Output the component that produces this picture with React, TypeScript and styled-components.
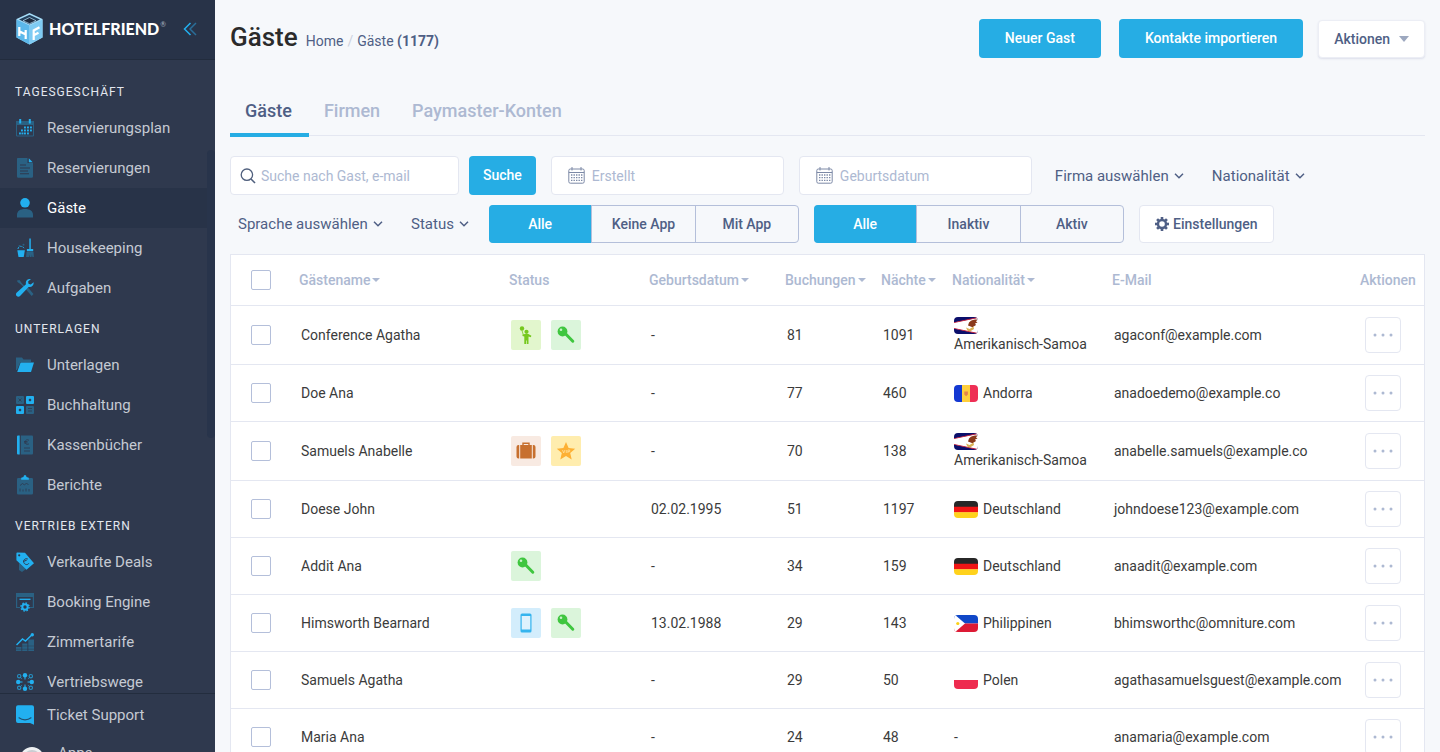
import React from "react";
import styled, { createGlobalStyle, css } from "styled-components";

const c = {
  bright: "#22b0f0",
  dim: "#2a6183",
  side: "#2f394e",
  sideDark: "#283348",
  blue: "#26ade4",
  text: "#4f5f85",
  muted: "#adb9d2",
  line: "#e4e7f1",
  outline: "#b4bfda",
  page: "#f6f8fb",
};

const Global = createGlobalStyle`
  *, *::before, *::after { box-sizing: border-box; }
  body { margin: 0; background: ${c.page}; color: #3b3b3b; font-family: Roboto, "Liberation Sans", sans-serif; font-size: 14px; }
  button, input, select { font: inherit; color: inherit; margin: 0; }
  svg { display: block; flex: none; }
`;

const Shell = styled.div`
  display: flex;
  height: 100vh;
  overflow: hidden;
`;

/* ---------- sidebar ---------- */

const Sidebar = styled.aside`
  display: flex;
  flex-direction: column;
  flex: none;
  width: 215px;
  position: relative;
  background: ${c.side};
`;

const Brand = styled.div`
  display: flex;
  align-items: center;
  height: 60px;
  flex: none;
  padding: 0 18px 2px 15px;
  background: ${c.sideDark};
  border-bottom: 1px solid #222c3d;
`;

const BrandLink = styled.a`
  display: flex;
  align-items: center;
  gap: 5px;
  color: #fff;
  text-decoration: none;
  font-family: Lato, "Liberation Sans", sans-serif;
  font-size: 16px;
  font-weight: 900;
  sup {
    align-self: flex-start;
    margin: 9px 0 0 -4px;
    font-size: 7px;
    line-height: 7px;
    font-weight: 400;
    color: #aab3c2;
  }
`;

const Collapse = styled.button`
  margin-left: auto;
  padding: 0;
  border: 0;
  background: none;
`;

const SideNav = styled.nav`
  flex: 1;
  min-height: 0;
  overflow: hidden;
  padding-top: 11px;
`;

const SideTitle = styled.h2`
  margin: 0;
  padding: 4px 15px 0;
  height: 37px;
  line-height: 35px;
  font-size: 12px;
  font-weight: 400;
  letter-spacing: 1px;
  text-transform: uppercase;
  color: #e3e7ee;
`;

const SideLink = styled.a<{ $active?: boolean }>`
  display: flex;
  align-items: center;
  gap: 13px;
  height: 40px;
  padding: 0 16px;
  font-size: 15px;
  text-decoration: none;
  color: ${(p) => (p.$active ? "#fff" : "#c5cad3")};
  background: ${(p) => (p.$active ? c.sideDark : "transparent")};
`;

const Thumb = styled.div`
  position: absolute;
  top: 150px;
  right: 0;
  width: 8px;
  height: 288px;
  border-radius: 4px;
  background: #28344b;
`;

const SideFooter = styled.div`
  flex: none;
  height: 59px;
  overflow: hidden;
  padding-top: 1px;
  background: ${c.side};
  border-top: 1px solid #232d3e;
`;

const AppsLink = styled(SideLink)`
  gap: 14px;
  height: 36px;
  padding-left: 20px;
`;

/* ---------- page head ---------- */

const Main = styled.main`
  flex: 1;
  min-width: 0;
  padding: 19px 15px 0;
`;

const Head = styled.header`
  display: flex;
  align-items: center;
  height: 39px;
`;

const Title = styled.h1`
  margin: 0 8px 0 0;
  padding-bottom: 4px;
  font-size: 26px;
  line-height: 36px;
  font-weight: 500;
  color: #2b2b2b;
`;

const Crumbs = styled.nav`
  padding-top: 4px;
  color: ${c.text};
  a { color: inherit; text-decoration: none; }
  span { color: #cdd2dd; padding: 0 4px; }
`;

const Actions = styled.div`
  display: flex;
  align-items: center;
  margin-left: auto;
`;

const Button = styled.button`
  height: 39px;
  padding: 0 26px 2px;
  border: 0;
  border-radius: 4px;
  background: ${c.blue};
  color: #fff;
  font-weight: 500;
  white-space: nowrap;
`;

const HeadButton = styled(Button)`
  margin-right: 18px;
`;

const SearchButton = styled(Button)`
  padding: 0 14px 2px;
  margin-left: -5px;
`;

const PlainButton = styled.button`
  display: flex;
  align-items: center;
  gap: 4px;
  height: 38px;
  padding: 0 15px;
  border: 1px solid ${c.line};
  border-radius: 4px;
  background: #fff;
  color: ${c.text};
  font-weight: 500;
`;

const MenuButton = styled(PlainButton)`
  gap: 9px;
  margin-left: -3px;
  border-color: #eceef5;
  box-shadow: 0 1px 2px rgba(80, 90, 150, 0.15);
`;

const Tabs = styled.div`
  display: flex;
  margin: 27px 0 20px;
  border-bottom: 1px solid ${c.line};
`;

const Tab = styled.button<{ $active?: boolean }>`
  height: 52px;
  margin-bottom: -2px;
  padding: 2px 17px 0 15px;
  border: 0;
  border-bottom: 4px solid ${(p) => (p.$active ? c.blue : "transparent")};
  background: none;
  font-size: 18px;
  font-weight: 500;
  color: ${(p) => (p.$active ? c.text : c.muted)};
`;

/* ---------- filters ---------- */

const FilterRow = styled.div`
  display: flex;
  align-items: center;
  gap: 15px;
  margin-bottom: 10px;
`;

const Field = styled.label<{ $icon?: "date" }>`
  display: flex;
  align-items: center;
  gap: ${(p) => (p.$icon ? 7 : 5)}px;
  flex: 0 1 ${(p) => (p.$icon ? 233 : 229)}px;
  height: 39px;
  padding: 0 10px 0 ${(p) => (p.$icon ? 16 : 9)}px;
  border: 1px solid ${c.line};
  border-radius: 4px;
  background: #fff;
  input {
    flex: 1;
    min-width: 0;
    padding: 0;
    border: 0;
    outline: 0;
    background: none;
  }
  input::placeholder { color: ${c.muted}; opacity: 1; }
`;

const Picker = styled.label`
  position: relative;
  display: flex;
  align-items: center;
  font-size: 15px;
  color: ${c.text};
  select {
    appearance: none;
    height: 38px;
    padding: 0 20px 0 8px;
    border: 0;
    background: none;
  }
  svg { position: absolute; right: 5px; pointer-events: none; }
`;

const Segments = styled.fieldset`
  display: flex;
  width: 310px;
  height: 38px;
  margin: 0;
  padding: 0;
  border: 1px solid ${c.outline};
  border-radius: 4px;
`;

const Segment = styled.label<{ $on?: boolean }>`
  position: relative;
  display: flex;
  flex: 1;
  align-items: center;
  justify-content: center;
  font-weight: 500;
  color: ${c.text};
  & + & { border-left: 1px solid ${c.outline}; }
  &:first-of-type { border-radius: 4px 0 0 4px; }
  &:last-of-type { border-radius: 0 4px 4px 0; }
  ${(p) =>
    p.$on &&
    css`
      margin: -1px 0 -1px -1px;
      background: ${c.blue};
      color: #fff;
    `}
  input {
    position: absolute;
    inset: 0;
    opacity: 0;
  }
`;

/* ---------- table ---------- */

const Frame = styled.div`
  margin-top: 11px;
  border: 1px solid ${c.line};
  background: #fff;
`;

const Table = styled.table`
  width: 100%;
  table-layout: fixed;
  border-spacing: 0;
  th {
    height: 51px;
    padding: 0 0 0 10px;
    border-bottom: 1px solid ${c.line};
    text-align: left;
    font-weight: 500;
    color: ${c.muted};
    white-space: nowrap;
  }
  td {
    padding: 10px 0 10px 12px;
    border-bottom: 1px solid ${c.line};
    line-height: 19px;
  }
  th:first-child, td:first-child { padding-left: 20px; }
  td:last-child { padding-left: 15px; }
`;

const Col = styled.col<{ $w?: number }>`
  width: ${(p) => (p.$w ? `${p.$w}px` : "auto")};
`;

const SortButton = styled.button`
  display: inline-flex;
  align-items: center;
  gap: 2px;
  padding: 0;
  border: 0;
  background: none;
  font-weight: 500;
`;

const Check = styled.input`
  appearance: none;
  display: block;
  width: 20px;
  height: 20px;
  border: 1px solid ${c.outline};
  border-radius: 2px;
  background: #fff;
`;

const Chips = styled.div`
  display: flex;
  gap: 10px;
`;

const Flag = styled.svg`
  display: inline-block;
  margin-right: 5px;
  border-radius: 4px;
  vertical-align: -4px;
`;

const Country = styled.span`
  display: inline-block;
  white-space: nowrap;
`;

const Dots = styled.button`
  display: flex;
  align-items: center;
  justify-content: center;
  width: 36px;
  height: 36px;
  padding: 0;
  border: 1px solid ${c.line};
  border-radius: 4px;
  background: #fff;
`;

/* ---------- drawings ---------- */

const I = ({ children }: { children: React.ReactNode }) => (
  <svg width="18" height="20" viewBox="0 0 18 20" aria-hidden="true">
    {children}
  </svg>
);

const dots = [
  [8, 9], [11, 9], [14, 9],
  [5, 12], [8, 12], [11, 12], [14, 12],
  [3, 15], [5.5, 15], [8, 15], [11, 15],
];

const icons: Record<string, React.ReactNode> = {
  plan: (
    <I>
      <path d="M0 3h18v4H0z" fill={c.dim} />
      <path d="M.5 6.500h17v11.500H.5z" fill="none" stroke={c.dim} />
      <path d="M3.200 1h2v4.500h-2zM12.800 1h2v4.500h-2z" fill={c.bright} />
      {dots.map(([x, y]) => (
        <rect key={`${x}-${y}`} x={x} y={y - 0.5} width="1.900" height="1.900" fill={c.bright} />
      ))}
    </I>
  ),
  doc: (
    <I>
      <path d="M2 0h9.500v5H17v13.500a1.300 1.300 0 0 1-1.300 1.300H2.300A1.300 1.300 0 0 1 1 18.500V1.200A1 1 0 0 1 2 0z" fill={c.dim} />
      <path d="M12.800.3 16.700 4.200H12.800z" fill={c.bright} />
      <path d="M4 7h6M4 10h10M4 13h8M4 15.700h9" stroke={c.side} strokeWidth="1.100" />
    </I>
  ),
  person: (
    <I>
      <circle cx="9" cy="4.800" r="4.800" fill={c.bright} />
      <path d="M1 19.500v-2.500c0-4 3-6 8-6s8 2 8 6v2.500z" fill={c.dim} />
    </I>
  ),
  clean: (
    <I>
      <path d="M1.300 12.200h7.600l-1.200 6.800H2.500z" fill={c.bright} />
      <path d="M2 11c0-3.500 5.500-3.500 6.300 0" fill="none" stroke={c.bright} strokeDasharray="2 1" />
      <circle cx="3.500" cy="8" r="1" fill={c.dim} />
      <circle cx="7.500" cy="6.800" r="1" fill={c.dim} />
      <path d="M13.300.5h1.500V11h2.400v2.200h-6.300V11h2.400z" fill={c.bright} />
      <path d="M10.500 14h7l.4 5h-1.500l-.5-2.500-.4 2.500h-1.800l-.3-2.500-.4 2.500h-2.900z" fill={c.dim} />
    </I>
  ),
  tools: (
    <I>
      <path d="M1 2.500 3.500 2 6 5.500l4 4-1 1-4-4L1.500 4zM10 11.500l2-2 5.500 6.500-1.800 2z" fill={c.dim} />
      <path
        d="M17.600 4.200l-2.900 2.400-2.200-.9-.4-2.200L15 1.100c-2.500-.8-5.200.8-5.200 3.600 0 .8.200 1.500.2 1.500L.8 14.400c-1.200 1.200-1 2.700-.1 3.600.9.900 2.500 1 3.600-.2l8.300-8.900c3 .8 5.600-1.600 5-4.700z"
        fill={c.bright}
      />
    </I>
  ),
  folder: (
    <I>
      <path d="M0 2.500h6l1.500 2H15V7H4.500L1 15H0z" fill={c.dim} />
      <path d="M4.600 7.400H18L15 17H1.200z" fill={c.bright} />
    </I>
  ),
  squares: (
    <I>
      <rect y="1" width="8" height="8" rx="1" fill={c.dim} />
      <rect x="10" y="1" width="8" height="8" rx="1" fill={c.bright} />
      <rect y="11" width="8" height="8" rx="1" fill={c.bright} />
      <rect x="10" y="11" width="8" height="8" rx="1" fill={c.dim} />
      <path d="M12.800 5h2.400M14 3.800v2.400M2.800 15h2.400M4 13.800v2.400" stroke={c.side} strokeWidth="1.300" />
      <path d="M12 13.500h4M12 16h4M2.500 3.500l3 3M5.500 3.500l-3 3" stroke={c.side} strokeWidth=".8" />
    </I>
  ),
  book: (
    <I>
      <path d="M2 .5h1.700v19H2A1 1 0 0 1 1 18.500v-17A1 1 0 0 1 2 .5z" fill={c.bright} />
      <path d="M4.800.5H16a1 1 0 0 1 1 1v17a1 1 0 0 1-1 1H4.800z" fill={c.dim} />
      <path d="M13 5.300c-2-1.300-4 0-4 1.800s2 3 4 1.800M8 6.500h3.500M8 7.900h3.500M8 13h6M8 16h6" fill="none" stroke={c.side} strokeWidth=".8" />
    </I>
  ),
  report: (
    <I>
      <path d="M2.300 3h13.400A1.300 1.300 0 0 1 17 4.300v14a1.300 1.300 0 0 1-1.300 1.300H2.300A1.300 1.300 0 0 1 1 18.300v-14A1.300 1.300 0 0 1 2.300 3z" fill={c.dim} />
      <path d="M5.200 4.700V2.800l2.300-.7C7.600.9 8.200.1 9 .1s1.400.8 1.500 2l2.300.7v1.900z" fill={c.bright} />
      <path d="M4 10.500l2.500-2 2 1.500 2-2 2 2M4 13.500v3M7 14.500v2M10 13.500v3M13 14v2.500" fill="none" stroke={c.side} strokeWidth=".8" />
    </I>
  ),
  tag: (
    <I>
      <path d="M3 11l7 6-4 3-3-2z" fill={c.dim} />
      <path d="M1.200.5 9 .8l9 10.400-7.500 6.500L.4 8.300V1.500a1 1 0 0 1 .8-1z" fill={c.bright} />
      <circle cx="3.200" cy="3.300" r="1.100" fill={c.side} />
      <path d="M11.800 7c-2.500-1-5 1-4 3.500s4 2.700 5 .8M7.200 9.500l3.500-1.300" fill="none" stroke={c.side} />
    </I>
  ),
  engine: (
    <I>
      <path d="M0 1h18v3H0z" fill={c.dim} />
      <path d="M4 15.500H.6V4.500h16.800v11H14" fill="none" stroke={c.dim} strokeWidth="1.200" />
      <path d="M3.500 7.300h11" stroke={c.bright} strokeWidth="1.300" />
      <circle cx="9" cy="15" r="2.700" fill="none" stroke={c.bright} strokeWidth="2" />
      <circle cx="9" cy="15" r="4.100" fill="none" stroke={c.bright} strokeWidth="1.300" strokeDasharray="1.600 1.620" />
    </I>
  ),
  rates: (
    <I>
      <path d="M0 15h5.400v4H0zM6.200 11.500h5.200V19H6.200zM12.300 7.500H18V19h-5.700z" fill={c.dim} />
      <path d="M0 17.200h18M6 14h12" stroke={c.side} strokeWidth=".5" />
      <path d="M.5 13 6.500 7l3 2 6.500-6.200" fill="none" stroke={c.bright} strokeWidth="1.500" />
      <circle cx="16.300" cy="2.700" r="1.700" fill={c.bright} />
    </I>
  ),
  ways: (
    <I>
      {[0, 90, 180, 270].map((a) => (
        <g key={a} transform={`rotate(${a} 9 10)`}>
          <path d="M9 5v2.500" stroke={c.bright} />
          <circle cx="9" cy="3.200" r="2.200" fill={c.bright} />
          <circle cx="14.800" cy="4.200" r="1.700" fill="none" stroke="#2592c6" strokeWidth="1.100" />
          <path d="M13.500 5.500 12.300 6.700" stroke="#2592c6" />
        </g>
      ))}
    </I>
  ),
  ticket: (
    <I>
      <path d="M2 .3h14a2 2 0 0 1 2 2v17.400L14 18H2a2 2 0 0 1-2-2V2.300a2 2 0 0 1 2-2z" fill={c.bright} />
      <path d="M3 12.800c3.300 2.700 8.700 2.700 12 0" fill="none" stroke="#23506f" strokeWidth="1.200" strokeLinecap="round" />
    </I>
  ),
};

const CubeLogo = () => (
  <svg width="29" height="34" viewBox="0 0 29 34" aria-hidden="true">
    <path d="M14.500 1 27.500 7v18.500l-13 7-13-7V7z" fill="#a5dcf8" />
    <path d="M14.500 13.500v19l-13-7V7.500z" fill="#5cb8ea" />
    <path d="M14.500 13.500v19l13-7V7.500z" fill="#7fcbf3" />
    <path d="M14.500 2.800 25 7.600l-10.500 5L4 7.600z" fill="#24405c" />
    <path d="M14.500 5.500 21 8.700l-6.500 3-6.500-3z" fill="#1f2b3f" stroke="#b7e3f9" strokeWidth=".7" />
    <path d="M4.300 15v9M10.700 18v9M4.300 19.300l6.400 3.200M18.700 28v-9.500l5.800-3.200M18.700 23.300l4.800-2.500" fill="none" stroke="#fff" strokeWidth="2.200" />
  </svg>
);

const Calendar = () => (
  <svg width="17" height="17" viewBox="0 0 17 17" fill="none" stroke="#7c89a6" aria-hidden="true">
    <rect x=".8" y="2" width="15.400" height="14.200" rx="1.500" />
    <path d="M.8 5.500h15.400M4 0v3.500M13 0v3.500" />
    <path d="M3 8h11.500M3 10.700h11.500M3 13.400h11.500" strokeDasharray="1.400 1.100" strokeWidth="1.300" />
  </svg>
);

const Magnifier = () => (
  <svg width="16" height="16" viewBox="0 0 16 16" fill="none" stroke="#4f5f7d" strokeWidth="1.300" aria-hidden="true">
    <circle cx="6.900" cy="6.700" r="5.700" />
    <path d="M11 11l4 4" strokeWidth="1.600" />
  </svg>
);

const Chevron = () => (
  <svg width="10" height="6" viewBox="0 0 10 6" fill="none" stroke={c.text} strokeWidth="1.500" aria-hidden="true">
    <path d="M1 .8l4 4 4-4" />
  </svg>
);

const Caret = () => (
  <svg width="8" height="4" viewBox="0 0 8 4" aria-hidden="true">
    <path d="M0 0h8L4 4z" fill={c.muted} />
  </svg>
);

const Gear = () => (
  <svg width="14" height="14" viewBox="0 0 14 14" aria-hidden="true">
    <circle cx="7" cy="7" r="4" fill="none" stroke={c.text} strokeWidth="2.400" />
    {[0, 45, 90, 135, 180, 225, 270, 315].map((a) => (
      <rect key={a} x="5.700" y="0" width="2.600" height="2.800" fill={c.text} transform={`rotate(${a} 7 7)`} />
    ))}
  </svg>
);

type ChipKind = "child" | "key" | "bag" | "vip" | "phone";

const chips: Record<ChipKind, { bg: string; label: string; art: React.ReactNode }> = {
  child: {
    bg: "#e2f6cd",
    label: "Kind",
    art: (
      <g fill="#76c81e">
        <circle cx="11" cy="8.500" r="2.200" />
        <path d="M11 10.500l1.500 5" stroke="#76c81e" strokeWidth=".8" />
        <circle cx="15.500" cy="11.800" r="2.100" />
        <path d="M11.500 14.800l2.300-.8h3.600l3 1.800-.6 1.500-2.300-.8V24h-1.700v-3.500h-.7V24h-1.800v-7.500l-1.800-.5z" />
      </g>
    ),
  },
  key: {
    bg: "#dbf5db",
    label: "Schlüssel",
    art: (
      <g>
        <path d="M14 13.200 21.800 21.200" stroke="#3fc63f" strokeWidth="3" strokeLinecap="round" />
        <circle cx="11.500" cy="11.500" r="4.900" fill="#3fc63f" />
        <circle cx="10" cy="9.800" r="1.300" fill="#c9f2c9" />
      </g>
    ),
  },
  bag: {
    bg: "#f8eae2",
    label: "Gepäck",
    art: (
      <g fill="#c7702f">
        <path d="M12 9.500V7.300h6v2.200" fill="none" stroke="#c7702f" strokeWidth="1.400" />
        <path d="M9.200 9h11.600v13.500H9.200zM5.500 11a2 2 0 0 1 2-2h.7v13.500h-.7a2 2 0 0 1-2-2zM24.500 11a2 2 0 0 0-2-2h-.7v13.500h.7a2 2 0 0 0 2-2z" />
      </g>
    ),
  },
  vip: {
    bg: "#ffedae",
    label: "VIP",
    art: (
      <g>
        <path d="M15 6l2.600 6.100 6.600.6-5 4.300 1.500 6.500-5.700-3.400-5.700 3.400L10.800 17l-5-4.300 6.600-.6z" fill="#fdb034" />
        <path d="M11.500 14l1.200 3 1.200-3M15.300 14v3M16.900 17v-3h1.800v1.600h-1.800" fill="none" stroke="#ffe09a" strokeWidth=".8" />
      </g>
    ),
  },
  phone: {
    bg: "#d3edfc",
    label: "App",
    art: (
      <g>
        <rect x="9.500" y="5.500" width="11" height="19" rx="1.500" fill="#35b4ee" />
        <path d="M10.700 8h8.600v13.500h-8.600z" fill="#dff2fd" />
      </g>
    ),
  },
};

const Chip = ({ kind }: { kind: ChipKind }) => (
  <svg width="30" height="30" viewBox="0 0 30 30" role="img" aria-label={chips[kind].label}>
    <rect width="30" height="30" rx="2" fill={chips[kind].bg} />
    {chips[kind].art}
  </svg>
);

const flags: Record<string, React.ReactNode> = {
  "Amerikanisch-Samoa": (
    <>
      <path d="M0 0h24v17H0z" fill="#0b0f6b" />
      <path d="M0 5.500 24 .8v15.600L0 11.500z" fill="#fff" />
      <path d="M0 5.200 24 0v.9L0 6.100zM0 11.800 24 17v-.9L0 10.900z" fill="#c8203a" />
      <path d="M15 5.500c2.500-2.800 5-3 8.500-3l-1.500 2 1.500 1-2.500 1 1 1.500-3.500 2.200L14 8.500z" fill="#8a3a1b" />
      <path d="M12 10.500l3.500 1.500 4-2.500.5 2.500-4 2.500-2.500-.8z" fill="#d9b154" />
    </>
  ),
  Andorra: (
    <>
      <path d="M0 0h8v17H0z" fill="#1438d2" />
      <path d="M8 0h8v17H8z" fill="#ffcf3c" />
      <path d="M16 0h8v17h-8z" fill="#ee2f55" />
      <path d="M10.300 6.500h3.600v3l-1.800 1.700-1.800-1.700z" fill="#e5824a" />
    </>
  ),
  Deutschland: (
    <>
      <path d="M0 0h24v6H0z" fill="#272727" />
      <path d="M0 5.700h24v5.800H0z" fill="#f01515" />
      <path d="M0 11.300h24V17H0z" fill="#ffd21c" />
    </>
  ),
  Philippinen: (
    <>
      <path d="M0 0h24v8.500H0z" fill="#1048c8" />
      <path d="M0 8.500h24V17H0z" fill="#dd1a35" />
      <path d="M0-1 11 8.500 0 18z" fill="#fff" />
      <circle cx="3.800" cy="8.500" r="1.600" fill="#fbd116" />
    </>
  ),
  Polen: (
    <>
      <path d="M0 0h24v8H0z" fill="#fff" />
      <path d="M0 8h24v9H0z" fill="#ee2b4f" />
    </>
  ),
};

/* ---------- data ---------- */

const sections: [string, [string, string][]][] = [
  ["Tagesgeschäft", [["plan", "Reservierungsplan"], ["doc", "Reservierungen"], ["person", "Gäste"], ["clean", "Housekeeping"], ["tools", "Aufgaben"]]],
  ["Unterlagen", [["folder", "Unterlagen"], ["squares", "Buchhaltung"], ["book", "Kassenbücher"], ["report", "Berichte"]]],
  ["Vertrieb extern", [["tag", "Verkaufte Deals"], ["engine", "Booking Engine"], ["rates", "Zimmertarife"], ["ways", "Vertriebswege"]]],
];

const columns: { label: string; w?: number; sort?: boolean }[] = [
  { label: "Gästename", w: 210, sort: true },
  { label: "Status", w: 140 },
  { label: "Geburtsdatum", w: 136, sort: true },
  { label: "Buchungen", w: 96, sort: true },
  { label: "Nächte", w: 71, sort: true },
  { label: "Nationalität", w: 160, sort: true },
  { label: "E-Mail" },
  { label: "Aktionen", w: 74 },
];

type Guest = { name: string; chips?: ChipKind[]; born?: string; bookings: number; nights: number; nation?: string; mail: string };

const guests: Guest[] = [
  { name: "Conference Agatha", chips: ["child", "key"], bookings: 81, nights: 1091, nation: "Amerikanisch-Samoa", mail: "agaconf@example.com" },
  { name: "Doe Ana", bookings: 77, nights: 460, nation: "Andorra", mail: "anadoedemo@example.co" },
  { name: "Samuels Anabelle", chips: ["bag", "vip"], bookings: 70, nights: 138, nation: "Amerikanisch-Samoa", mail: "anabelle.samuels@example.co" },
  { name: "Doese John", born: "02.02.1995", bookings: 51, nights: 1197, nation: "Deutschland", mail: "johndoese123@example.com" },
  { name: "Addit Ana", chips: ["key"], bookings: 34, nights: 159, nation: "Deutschland", mail: "anaadit@example.com" },
  { name: "Himsworth Bearnard", chips: ["phone", "key"], born: "13.02.1988", bookings: 29, nights: 143, nation: "Philippinen", mail: "bhimsworthc@omniture.com" },
  { name: "Samuels Agatha", bookings: 29, nights: 50, nation: "Polen", mail: "agathasamuelsguest@example.com" },
  { name: "Maria Ana", bookings: 24, nights: 48, mail: "anamaria@example.com" },
];

const Dropdown = ({ label }: { label: string }) => (
  <Picker>
    <select aria-label={label}>
      <option>{label}</option>
    </select>
    <Chevron />
  </Picker>
);

const Switcher = ({ name, options }: { name: string; options: string[] }) => {
  const [value, setValue] = React.useState(options[0]);
  return (
    <Segments aria-label={name}>
      {options.map((o) => (
        <Segment key={o} $on={o === value}>
          <input type="radio" name={name} checked={o === value} onChange={() => setValue(o)} />
          {o}
        </Segment>
      ))}
    </Segments>
  );
};

export default function App() {
  return (
    <>
      <Global />
      <Shell>
        <Sidebar>
          <Brand>
            <BrandLink href="#home">
              <CubeLogo />
              HOTELFRIEND
              <sup>®</sup>
            </BrandLink>
            <Collapse aria-label="Menü einklappen">
              <svg width="14" height="14" viewBox="0 0 14 14" fill="none" strokeWidth="1.500">
                <path d="M7.500 1l-6 6 6 6" stroke={c.bright} />
                <path d="M13 1 7 7l6 6" stroke="#2a6e99" />
              </svg>
            </Collapse>
          </Brand>
          <SideNav>
            {sections.map(([title, items]) => (
              <section key={title}>
                <SideTitle>{title}</SideTitle>
                {items.map(([icon, label]) => (
                  <SideLink key={label} href={`#${icon}`} $active={label === "Gäste"}>
                    {icons[icon]}
                    {label}
                  </SideLink>
                ))}
              </section>
            ))}
          </SideNav>
          <Thumb />
          <SideFooter>
            <SideLink href="#ticket">
              {icons.ticket}
              Ticket Support
            </SideLink>
            <AppsLink href="#apps">
              <svg width="24" height="24" viewBox="0 0 24 24" aria-hidden="true">
                <circle cx="12" cy="18" r="12" fill="#eef0f2" />
                <circle cx="12" cy="18" r="9" fill="#c9cdd2" />
              </svg>
              Apps
            </AppsLink>
          </SideFooter>
        </Sidebar>

        <Main>
          <Head>
            <Title>Gäste</Title>
            <Crumbs aria-label="Brotkrumen">
              <a href="#home">Home</a>
              <span>/</span>
              <a href="#person">
                Gäste <b>(1177)</b>
              </a>
            </Crumbs>
            <Actions>
              <HeadButton>Neuer Gast</HeadButton>
              <HeadButton>Kontakte importieren</HeadButton>
              <MenuButton>
                Aktionen
                <svg width="10" height="6" viewBox="0 0 10 6" aria-hidden="true">
                  <path d="M0 0h10L5 6z" fill="#9da8bf" />
                </svg>
              </MenuButton>
            </Actions>
          </Head>

          <Tabs role="tablist">
            <Tab role="tab" aria-selected $active>Gäste</Tab>
            <Tab role="tab">Firmen</Tab>
            <Tab role="tab">Paymaster-Konten</Tab>
          </Tabs>

          <FilterRow>
            <Field>
              <Magnifier />
              <input type="text" aria-label="Suche" placeholder="Suche nach Gast, e-mail" />
            </Field>
            <SearchButton>Suche</SearchButton>
            <Field $icon="date">
              <Calendar />
              <input type="text" aria-label="Erstellt" placeholder="Erstellt" />
            </Field>
            <Field $icon="date">
              <Calendar />
              <input type="text" aria-label="Geburtsdatum" placeholder="Geburtsdatum" />
            </Field>
            <Dropdown label="Firma auswählen" />
            <Dropdown label="Nationalität" />
          </FilterRow>
          <FilterRow>
            <Dropdown label="Sprache auswählen" />
            <Dropdown label="Status" />
            <Switcher name="App" options={["Alle", "Keine App", "Mit App"]} />
            <Switcher name="Aktivität" options={["Alle", "Inaktiv", "Aktiv"]} />
            <PlainButton>
              <Gear />
              Einstellungen
            </PlainButton>
          </FilterRow>

          <Frame>
            <Table>
              <colgroup>
                <Col $w={58} />
                {columns.map((k) => (
                  <Col key={k.label} $w={k.w} />
                ))}
              </colgroup>
              <thead>
                <tr>
                  <th>
                    <Check type="checkbox" aria-label="Alle auswählen" />
                  </th>
                  {columns.map((k) => (
                    <th key={k.label}>
                      {k.sort ? (
                        <SortButton>
                          {k.label}
                          <Caret />
                        </SortButton>
                      ) : (
                        k.label
                      )}
                    </th>
                  ))}
                </tr>
              </thead>
              <tbody>
                {guests.map((g) => (
                  <tr key={g.name}>
                    <td>
                      <Check type="checkbox" aria-label={g.name} />
                    </td>
                    <td>{g.name}</td>
                    <td>
                      <Chips>
                        {g.chips?.map((k) => (
                          <Chip key={k} kind={k} />
                        ))}
                      </Chips>
                    </td>
                    <td>{g.born ?? "-"}</td>
                    <td>{g.bookings}</td>
                    <td>{g.nights}</td>
                    <td>
                      {g.nation ? (
                        <>
                          <Flag width="24" height="17" viewBox="0 0 24 17" aria-hidden="true">
                            {flags[g.nation]}
                          </Flag>
                          <Country>{g.nation}</Country>
                        </>
                      ) : (
                        "-"
                      )}
                    </td>
                    <td>{g.mail}</td>
                    <td>
                      <Dots aria-label={`Aktionen für ${g.name}`}>
                        <svg width="20" height="4" viewBox="0 0 20 4" fill={c.muted} aria-hidden="true">
                          <circle cx="2" cy="2" r="1.500" />
                          <circle cx="10" cy="2" r="1.500" />
                          <circle cx="18" cy="2" r="1.500" />
                        </svg>
                      </Dots>
                    </td>
                  </tr>
                ))}
              </tbody>
            </Table>
          </Frame>
        </Main>
      </Shell>
    </>
  );
}
